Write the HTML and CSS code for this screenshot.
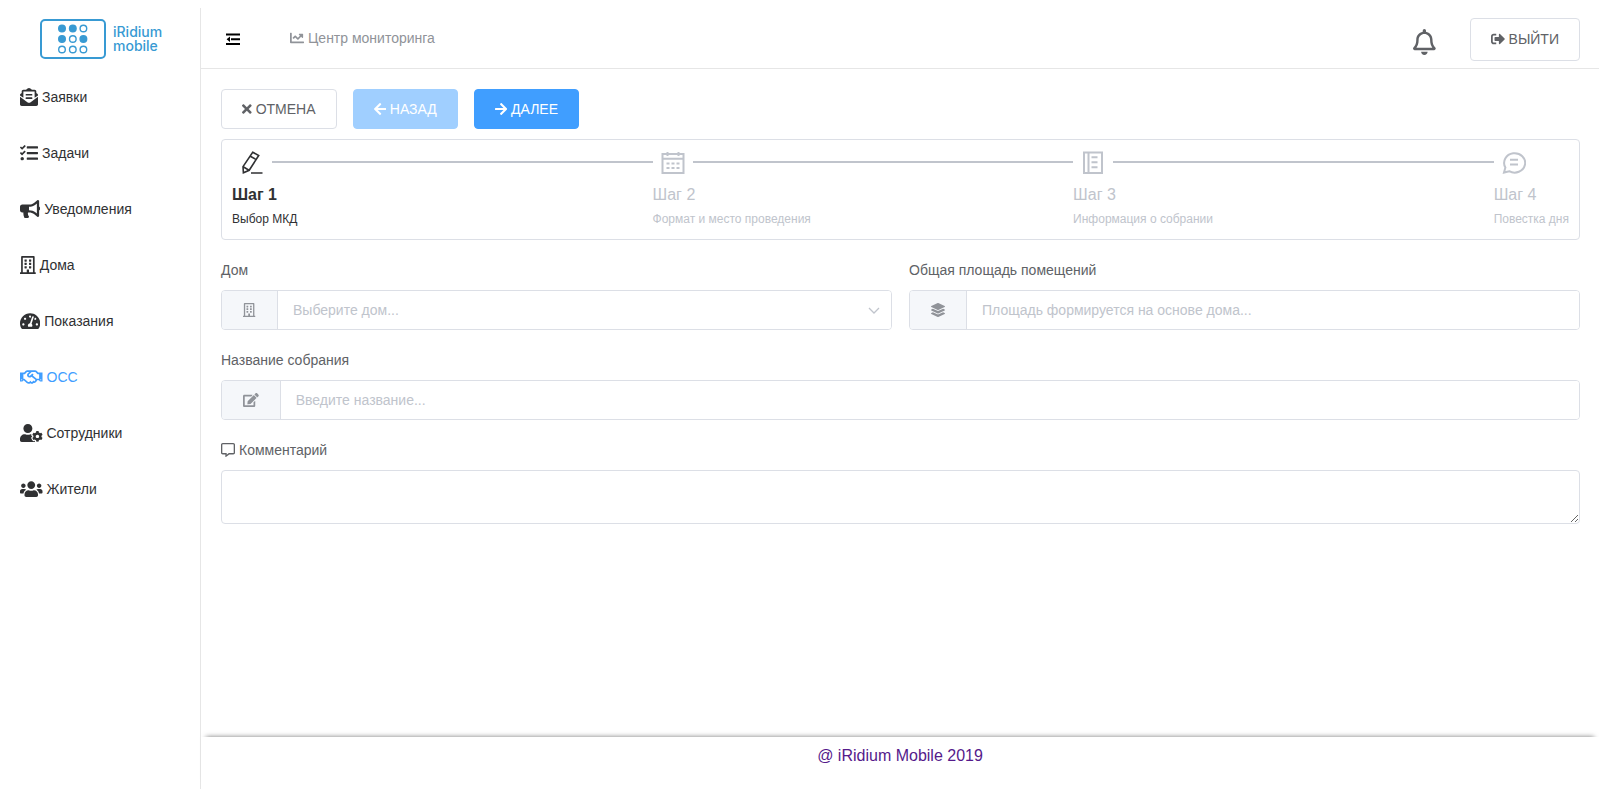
FILE: index.html
```html
<!DOCTYPE html>
<html lang="ru">
<head>
<meta charset="utf-8">
<title>iRidium mobile</title>
<link rel="stylesheet" href="styles.css">
</head>
<body>
<div class="layout">
  <aside class="sidebar">
    <a class="logo" href="#" aria-label="iRidium mobile">
      <svg class="logo-mark" viewBox="0 0 66 40" aria-hidden="true">
        <rect x="1" y="1" width="64" height="38" rx="4" fill="none" stroke="currentColor" stroke-width="2"/>
        <g fill="currentColor" stroke="currentColor" stroke-width="1.4">
          <circle cx="22" cy="9.500" r="3.300"/><circle cx="32.800" cy="9.500" r="3.300"/><circle cx="43.400" cy="9.500" r="3.300" fill="none"/>
          <circle cx="22" cy="20" r="3.300"/><circle cx="32.800" cy="20" r="3.300" fill="none"/><circle cx="43.400" cy="20" r="3.300"/>
          <circle cx="22" cy="30.500" r="3.300" fill="none"/><circle cx="32.800" cy="30.500" r="3.300" fill="none"/><circle cx="43.400" cy="30.500" r="3.300" fill="none"/>
        </g>
      </svg>
      <span class="logo-text">iRidium<br>mobile</span>
    </a>
    <nav class="menu">
      <a class="menu-item" href="#"><svg class="icon" viewBox="0 0 512 512"><path d="M176 216h160c8.840 0 16-7.160 16-16v-16c0-8.840-7.160-16-16-16H176c-8.840 0-16 7.160-16 16v16c0 8.840 7.160 16 16 16zm-16 80c0 8.840 7.160 16 16 16h160c8.840 0 16-7.160 16-16v-16c0-8.840-7.160-16-16-16H176c-8.840 0-16 7.160-16 16v16zm96 121.130c-16.420 0-32.840-5.060-46.860-15.190L0 250.860V464c0 26.510 21.490 48 48 48h416c26.510 0 48-21.490 48-48V250.860L302.860 401.940c-14.020 10.120-30.440 15.190-46.860 15.190zm237.610-254.180c-8.850-6.940-17.240-13.470-29.610-22.810V96c0-26.510-21.490-48-48-48h-77.550c-3.040-2.200-5.870-4.260-9.040-6.560C312.600 29.170 279.200-.35 256 0c-23.200-.35-56.590 29.170-73.410 41.440-3.170 2.300-6 4.360-9.040 6.560H96c-26.510 0-48 21.490-48 48v44.140c-12.370 9.330-20.760 15.870-29.610 22.810A48 48 0 0 0 0 200.720v10.650l96 69.350V96h320v184.720l96-69.350v-10.650c0-14.740-6.780-28.670-18.390-37.770z"/></svg><span>Заявки</span></a>
      <a class="menu-item" href="#"><svg class="icon" viewBox="0 0 512 512"><path d="M139.610 35.500a12 12 0 0 0-17 0L58.930 98.810l-22.700-22.120a12 12 0 0 0-17 0L3.530 92.410a12 12 0 0 0 0 17l47.590 47.400a12.780 12.780 0 0 0 17.610 0l15.590-15.620L156.520 69a12.090 12.090 0 0 0 .09-17zm0 159.190a12 12 0 0 0-17 0l-63.680 63.720-22.700-22.100a12 12 0 0 0-17 0L3.530 252a12 12 0 0 0 0 17L51 316.500a12.770 12.770 0 0 0 17.600 0l15.700-15.690 72.200-72.220a12 12 0 0 0 .09-16.900zM64 368c-26.490 0-48.590 21.500-48.590 48S37.530 464 64 464a48 48 0 0 0 0-96zm432 16H208a16 16 0 0 0-16 16v32a16 16 0 0 0 16 16h288a16 16 0 0 0 16-16v-32a16 16 0 0 0-16-16zm0-320H208a16 16 0 0 0-16 16v32a16 16 0 0 0 16 16h288a16 16 0 0 0 16-16V80a16 16 0 0 0-16-16zm0 160H208a16 16 0 0 0-16 16v32a16 16 0 0 0 16 16h288a16 16 0 0 0 16-16v-32a16 16 0 0 0-16-16z"/></svg><span>Задачи</span></a>
      <a class="menu-item" href="#"><svg class="icon" viewBox="0 0 576 512"><path d="M576 240c0-23.630-12.950-44.040-32-55.120V32.010C544 23.260 537.020 0 512 0c-7.120 0-14.190 2.380-19.980 7.020l-85.030 68.030C364.280 109.190 310.660 128 256 128H64c-35.350 0-64 28.650-64 64v96c0 35.350 28.650 64 64 64h33.700c-1.390 10.480-2.180 21.140-2.180 32 0 39.770 9.260 77.350 25.560 110.940 5.190 10.690 16.520 17.060 28.400 17.060h74.280c26.050 0 41.690-29.840 25.900-50.560-16.400-21.520-26.150-48.360-26.150-77.440 0-11.110 1.620-21.790 4.410-32H256c54.660 0 108.280 18.810 150.980 52.950l85.030 68.030a32 32 0 0 0 19.980 7.020c24.920 0 32-22.780 32-32V295.130C563.050 284.040 576 263.630 576 240zm-96 141.420l-33.050-26.440C392.950 311.780 325.120 288 256 288v-96c69.120 0 136.950-23.780 190.950-66.980L480 98.580v282.840z"/></svg><span>Уведомления</span></a>
      <a class="menu-item" href="#"><svg class="icon" viewBox="0 0 448 512"><path id="building" d="M128 148v-40c0-6.600 5.400-12 12-12h40c6.600 0 12 5.400 12 12v40c0 6.600-5.400 12-12 12h-40c-6.600 0-12-5.400-12-12zm140 12h40c6.600 0 12-5.400 12-12v-40c0-6.600-5.400-12-12-12h-40c-6.600 0-12 5.400-12 12v40c0 6.600 5.400 12 12 12zm-128 96h40c6.600 0 12-5.400 12-12v-40c0-6.600-5.400-12-12-12h-40c-6.600 0-12 5.400-12 12v40c0 6.600 5.400 12 12 12zm128 0h40c6.600 0 12-5.400 12-12v-40c0-6.600-5.400-12-12-12h-40c-6.600 0-12 5.400-12 12v40c0 6.600 5.400 12 12 12zm-76 84v-40c0-6.600-5.400-12-12-12h-40c-6.600 0-12 5.400-12 12v40c0 6.600 5.400 12 12 12h40c6.600 0 12-5.400 12-12zm76 12h40c6.600 0 12-5.400 12-12v-40c0-6.600-5.400-12-12-12h-40c-6.600 0-12 5.400-12 12v40c0 6.600 5.400 12 12 12zm180 124v36H0v-36c0-6.600 5.400-12 12-12h19.500V24c0-13.300 10.700-24 24-24h337c13.300 0 24 10.700 24 24v440H436c6.600 0 12 5.400 12 12zM79.500 463H192v-67c0-6.600 5.400-12 12-12h40c6.600 0 12 5.400 12 12v67h112.500V49L80 48l-.5 415z"/></svg><span>Дома</span></a>
      <a class="menu-item" href="#"><svg class="icon" viewBox="0 0 576 512"><path d="M288 32C128.940 32 0 160.940 0 320c0 52.800 14.250 102.260 39.060 144.800 5.610 9.620 16.300 15.200 27.440 15.200h443c11.140 0 21.830-5.580 27.440-15.200C561.750 422.260 576 372.800 576 320c0-159.060-128.940-288-288-288zm0 64c14.710 0 26.580 10.130 30.320 23.650-1.110 2.260-2.640 4.230-3.450 6.670l-9.220 27.670c-5.130 3.490-10.970 6.010-17.640 6.010-17.670 0-32-14.330-32-32S270.330 96 288 96zM96 384c-17.670 0-32-14.330-32-32s14.330-32 32-32 32 14.330 32 32-14.330 32-32 32zm48-160c-17.670 0-32-14.330-32-32s14.330-32 32-32 32 14.330 32 32-14.330 32-32 32zm246.770-72.410l-61.330 184C343.130 347.330 352 364.540 352 384c0 11.720-3.380 22.550-8.880 32H232.880c-5.500-9.450-8.880-20.280-8.880-32 0-33.940 26.500-61.430 59.900-63.590l61.340-184.010c4.170-12.560 17.730-19.450 30.360-15.170 12.570 4.190 19.350 17.790 15.170 30.360zm14.660 57.200l15.520-46.550c3.470-1.290 7.130-2.230 11.050-2.230 17.670 0 32 14.330 32 32s-14.330 32-32 32c-11.380-.01-20.890-6.280-26.570-15.220zM480 384c-17.670 0-32-14.330-32-32s14.330-32 32-32 32 14.330 32 32-14.330 32-32 32z"/></svg><span>Показания</span></a>
      <a class="menu-item menu-item-active" href="#" aria-current="page"><svg class="icon" viewBox="0 0 640 512"><path d="M519.200 127.900l-47.600-47.600A56.250 56.250 0 0 0 432 64H205.200c-14.800 0-29.100 5.900-39.600 16.300L118 127.900H0v255.700h64c17.600 0 31.800-14.200 31.900-31.700h9.100l84.600 76.400c30.900 25.100 73.800 25.700 105.600 3.800 12.500 10.800 26 15.900 41.100 15.900 18.200 0 35.300-7.400 48.800-24 22.100 8.700 48.200 2.600 64-16.800l26.200-32.300c5.600-6.900 9.100-14.800 10.900-23h57.900c.1 17.500 14.400 31.700 31.900 31.700h64V127.900H519.200zM48 351.600c-8.800 0-16-7.200-16-16s7.200-16 16-16 16 7.200 16 16c0 8.900-7.200 16-16 16zm390-6.900l-26.100 32.200c-2.800 3.400-7.800 4-11.300 1.200l-23.900-19.400-30 36.500c-6 7.300-15 4.800-18 2.400l-36.800-31.500-15.600 19.200c-13.900 17.100-39.200 19.700-55.300 6.600l-97.300-88H96V175.800h41.900l61.700-61.600c2-.8 3.700-1.500 5.700-2.300H262l-38.700 35.500c-29.400 26.900-31.100 72.300-4.400 101.300 14.800 16.200 61.200 41.200 101.500 4.400l8.200-7.500 108.200 87.800c3.400 2.800 3.900 7.900 1.200 11.300zm106-40.800h-69.200c-2.300-2.800-4.900-5.400-7.700-7.700l-102.700-83.400 12.500-11.400c6.500-6 7-16.100 1-22.600L367 167.100c-6-6.500-16.100-6.900-22.600-1l-55.200 50.600c-9.500 8.700-25.700 9.400-34.600 0-9.300-9.900-8.500-25.100 1.200-33.900l65.600-60.100c7.400-6.800 17-10.500 27-10.500l83.700-.2c2.100 0 4.100.8 5.500 2.300l61.700 61.600H544v128zm48 47.700c-8.800 0-16-7.200-16-16s7.200-16 16-16 16 7.200 16 16c0 8.900-7.200 16-16 16z"/></svg><span>ОСС</span></a>
      <a class="menu-item" href="#"><svg class="icon" viewBox="0 0 640 512"><path d="M610.500 373.300c2.600-14.100 2.600-28.500 0-42.600l25.800-14.900c3-1.700 4.300-5.200 3.300-8.500-6.700-21.600-18.200-41.200-33.200-57.400-2.300-2.500-6-3.100-9-1.400l-25.800 14.900c-10.900-9.300-23.400-16.500-36.900-21.300v-29.800c0-3.400-2.400-6.400-5.700-7.100-22.300-5-45-4.800-66.200 0-3.300.7-5.700 3.700-5.700 7.100v29.800c-13.500 4.800-26 12-36.900 21.300l-25.800-14.900c-2.900-1.700-6.700-1.100-9 1.400-15 16.200-26.500 35.800-33.200 57.400-1 3.300.4 6.800 3.300 8.500l25.800 14.900c-2.600 14.100-2.600 28.500 0 42.600l-25.800 14.900c-3 1.700-4.300 5.200-3.300 8.500 6.700 21.600 18.200 41.100 33.200 57.400 2.300 2.500 6 3.100 9 1.400l25.800-14.900c10.900 9.300 23.400 16.500 36.900 21.300v29.800c0 3.400 2.400 6.400 5.700 7.100 22.300 5 45 4.800 66.200 0 3.300-.7 5.700-3.700 5.700-7.100v-29.800c13.500-4.800 26-12 36.900-21.300l25.800 14.900c2.900 1.700 6.700 1.100 9-1.400 15-16.200 26.500-35.800 33.200-57.400 1-3.300-.4-6.800-3.300-8.500l-25.800-14.900zM496 400.500c-26.800 0-48.500-21.800-48.500-48.500s21.800-48.500 48.500-48.500 48.500 21.800 48.500 48.500-21.700 48.500-48.500 48.500zM224 256c70.700 0 128-57.300 128-128S294.700 0 224 0 96 57.300 96 128s57.300 128 128 128zm201.200 226.500c-2.300-1.200-4.600-2.600-6.800-3.900l-7.900 4.600c-6 3.400-12.800 5.300-19.600 5.300-10.900 0-21.400-4.600-28.900-12.600-18.300-19.800-32.300-43.900-40.200-69.600-5.500-17.700 1.900-36.400 17.900-45.700l7.900-4.600c-.1-2.600-.1-5.200 0-7.800l-7.900-4.600c-16-9.200-23.400-28-17.900-45.700.9-2.900 2.200-5.800 3.200-8.700-3.800-.3-7.500-1.200-11.400-1.200h-16.700c-22.200 10.200-46.900 16-72.900 16s-50.600-5.800-72.900-16h-16.700C60.200 288 0 348.200 0 422.400V464c0 26.500 21.500 48 48 48h352c10.100 0 19.500-3.200 27.200-8.500-1.200-3.800-2-7.700-2-11.800v-9.200z"/></svg><span>Сотрудники</span></a>
      <a class="menu-item" href="#"><svg class="icon" viewBox="0 0 640 512"><path d="M96 224c35.300 0 64-28.700 64-64s-28.700-64-64-64-64 28.700-64 64 28.700 64 64 64zm448 0c35.300 0 64-28.700 64-64s-28.700-64-64-64-64 28.700-64 64 28.700 64 64 64zm32 32h-64c-17.600 0-33.500 7.100-45.100 18.600 40.300 22.100 68.900 62 75.100 109.400h66c17.700 0 32-14.300 32-32v-32c0-35.300-28.700-64-64-64zm-256 0c61.900 0 112-50.100 112-112S381.900 32 320 32 208 82.100 208 144s50.100 112 112 112zm76.800 32h-8.300c-20.800 10-43.900 16-68.500 16s-47.600-6-68.500-16h-8.300C179.600 288 128 339.600 128 403.200V432c0 26.500 21.500 48 48 48h288c26.500 0 48-21.500 48-48v-28.800c0-63.600-51.600-115.200-115.200-115.200zm-223.700-13.400C161.500 263.100 145.600 256 128 256H64c-35.300 0-64 28.700-64 64v32c0 17.700 14.300 32 32 32h65.900c6.300-47.400 34.900-87.300 75.200-109.400z"/></svg><span>Жители</span></a>
    </nav>
  </aside>

  <div class="page">
    <header class="header">
      <button class="toggle" type="button" aria-label="Свернуть меню">
        <svg class="icon" viewBox="0 0 14 16"><path d="M0 2.500h14v2H0zM5 7.300h9v2H5zM0 12h14v2H0zM4 5.600v5.400L.6 8.300z"/></svg>
      </button>
      <a class="monitor-link" href="#"><svg class="icon" viewBox="0 0 512 512"><path d="M496 384H64V80c0-8.840-7.160-16-16-16H16C7.160 64 0 71.160 0 80v336c0 17.670 14.330 32 32 32h464c8.840 0 16-7.160 16-16v-32c0-8.840-7.160-16-16-16zM464 96H345.940c-21.380 0-32.090 25.850-16.970 40.970l32.400 32.400L288 242.750l-73.370-73.370c-12.500-12.500-32.760-12.500-45.250 0l-68.690 68.690c-6.250 6.250-6.250 16.380 0 22.630l22.620 22.620c6.250 6.250 16.380 6.250 22.630 0L192 237.250l73.370 73.370c12.500 12.500 32.760 12.500 45.250 0l96-96 32.400 32.400c15.120 15.120 40.970 4.410 40.970-16.970V112c.01-8.840-7.150-16-15.990-16z"/></svg><span>Центр мониторинга</span></a>
      <button class="bell" type="button" aria-label="Оповещения">
        <svg class="icon" viewBox="0 0 448 512"><path d="M439.390 362.290c-19.320-20.760-55.470-51.990-55.470-154.290 0-77.700-54.480-139.900-127.940-155.160V32c0-17.670-14.320-32-31.980-32s-31.980 14.330-31.980 32v20.840C118.560 68.100 64.080 130.300 64.080 208c0 102.300-36.150 133.530-55.470 154.290-6 6.450-8.660 14.160-8.610 21.710.11 16.400 12.980 32 32.100 32h383.800c19.120 0 32-15.600 32.100-32 .05-7.550-2.610-15.270-8.610-21.710zM67.530 368c21.220-27.970 44.420-74.330 44.530-159.420 0-.2-.06-.38-.06-.58 0-61.860 50.140-112 112-112s112 50.140 112 112c0 .2-.06.38-.06.58.11 85.100 23.310 131.460 44.530 159.420H67.530zM224 512c35.320 0 63.970-28.650 63.970-64H160.030c0 35.350 28.650 64 63.970 64z"/></svg>
      </button>
      <button class="button logout" type="button"><svg class="icon" viewBox="0 0 512 512"><path d="M497 273L329 441c-15 15-41 4.500-41-17v-96H152c-13.300 0-24-10.700-24-24v-96c0-13.300 10.700-24 24-24h136V88c0-21.400 25.900-32 41-17l168 168c9.300 9.400 9.300 24.600 0 34zM192 436v-40c0-6.600-5.400-12-12-12H96c-17.700 0-32-14.300-32-32V160c0-17.700 14.300-32 32-32h84c6.600 0 12-5.400 12-12V76c0-6.600-5.400-12-12-12H96c-53 0-96 43-96 96v192c0 53 43 96 96 96h84c6.600 0 12-5.400 12-12z"/></svg><span>ВЫЙТИ</span></button>
    </header>

    <main class="content">
      <div class="actions">
        <button class="button" type="button"><svg class="icon" viewBox="0 0 352 512"><path d="M242.720 256l100.070-100.070c12.280-12.280 12.280-32.190 0-44.480l-22.240-22.240c-12.280-12.280-32.190-12.280-44.480 0L176 189.280 75.930 89.210c-12.280-12.280-32.190-12.280-44.480 0L9.210 111.450c-12.280 12.280-12.280 32.190 0 44.480L109.280 256 9.210 356.070c-12.280 12.280-12.280 32.190 0 44.480l22.240 22.240c12.280 12.280 32.200 12.280 44.480 0L176 322.720l100.070 100.070c12.280 12.280 32.200 12.280 44.480 0l22.240-22.240c12.280-12.280 12.280-32.190 0-44.480L242.720 256z"/></svg><span>ОТМЕНА</span></button>
        <button class="button button-primary" type="button" disabled><svg class="icon" viewBox="0 0 448 512"><path d="M257.500 445.100l-22.200 22.200c-9.400 9.400-24.600 9.400-33.900 0L7 273c-9.400-9.400-9.400-24.600 0-33.900L201.400 44.700c9.400-9.400 24.600-9.400 33.900 0l22.200 22.200c9.500 9.500 9.300 25-.4 34.300L136.600 216H424c13.300 0 24 10.700 24 24v32c0 13.300-10.700 24-24 24H136.600l120.500 114.800c9.800 9.300 10 24.800.4 34.300z"/></svg><span>НАЗАД</span></button>
        <button class="button button-primary" type="button"><svg class="icon" viewBox="0 0 448 512"><path d="M190.500 66.900l22.200-22.200c9.400-9.400 24.600-9.400 33.900 0L441 239c9.400 9.400 9.400 24.600 0 33.900L246.600 467.300c-9.400 9.400-24.600 9.400-33.900 0l-22.200-22.200c-9.500-9.500-9.300-25 .4-34.300L311.400 296H24c-13.300 0-24-10.700-24-24v-32c0-13.300 10.700-24 24-24h287.400L190.900 101.200c-9.800-9.300-10-24.800-.4-34.300z"/></svg><span>ДАЛЕЕ</span></button>
      </div>

      <ol class="steps">
        <li class="step step-current" aria-current="step">
          <div class="step-head"><svg class="step-icon" viewBox="0 0 24 24"><path d="M12.700 2.200l6 3.300L9.200 20.300l-5.800 2.500-.4-6.200zM10.300 6.200l6 3.400M3.200 16.800l5.800 3.400M11 23h11.500"/></svg></div>
          <div class="step-title">Шаг 1</div>
          <div class="step-text">Выбор МКД</div>
        </li>
        <li class="step">
          <div class="step-head"><svg class="step-icon" viewBox="0 0 24 24"><path d="M1.500 4h21v19h-21zM1.500 8.800h21M6.500 2v4M17.500 2v4M5.500 13.500h3M10.500 13.500h3M15.500 13.500h3M5.500 18h3M10.500 18h3M15.500 18h3"/></svg></div>
          <div class="step-title">Шаг 2</div>
          <div class="step-text">Формат и место проведения</div>
        </li>
        <li class="step">
          <div class="step-head"><svg class="step-icon" viewBox="0 0 24 24"><path d="M3 2.500h18v20.500H3zM7.500 2.500v20.500M10.500 7.200h6M10.500 12.200h6M10.500 17.200h6"/></svg></div>
          <div class="step-title">Шаг 3</div>
          <div class="step-text">Информация о собрании</div>
        </li>
        <li class="step step-last">
          <div class="step-head"><svg class="step-icon" viewBox="0 0 24 24"><path d="M2 22.500l1.400-5A10.500 9.700 0 1 1 7.200 21.200zM8 9.700h8M8 14.500h8"/></svg></div>
          <div class="step-title">Шаг 4</div>
          <div class="step-text">Повестка дня</div>
        </li>
      </ol>

      <form class="form">
        <div class="field-row">
          <div class="field">
            <label class="label" for="house">Дом</label>
            <div class="group">
              <span class="addon"><svg class="icon" viewBox="0 0 448 512"><use href="#building"/></svg></span>
              <select class="control select" id="house"><option value="">Выберите дом...</option></select>
              <svg class="chevron" viewBox="0 0 12 8" aria-hidden="true"><path d="M1 1l5 5 5-5"/></svg>
            </div>
          </div>
          <div class="field">
            <label class="label" for="area">Общая площадь помещений</label>
            <div class="group">
              <span class="addon"><svg class="icon" viewBox="0 0 512 512"><path d="M12.410 148.020l232.940 105.670c6.800 3.090 14.490 3.090 21.290 0l232.940-105.670c16.550-7.510 16.550-32.520 0-40.030L266.650 2.310a25.600 25.600 0 0 0-21.290 0L12.410 107.980c-16.550 7.510-16.550 32.530 0 40.040zm487.180 88.280l-58.090-26.330-161.640 73.270c-7.560 3.430-15.590 5.170-23.860 5.170s-16.290-1.740-23.860-5.170L70.510 209.970l-58.100 26.330c-16.550 7.500-16.550 32.500 0 40l232.940 105.590c6.800 3.080 14.490 3.080 21.290 0L499.590 276.300c16.550-7.500 16.550-32.500 0-40zm0 127.800l-57.870-26.230-161.860 73.370c-7.560 3.430-15.590 5.170-23.860 5.170s-16.290-1.740-23.860-5.170L70.290 337.870 12.410 364.100c-16.550 7.500-16.550 32.500 0 40l232.940 105.590c6.800 3.080 14.490 3.080 21.290 0L499.590 404.100c16.550-7.500 16.550-32.500 0-40z"/></svg></span>
              <input class="control" id="area" type="text" placeholder="Площадь формируется на основе дома..." readonly>
            </div>
          </div>
        </div>
        <div class="field">
          <label class="label" for="title">Название собрания</label>
          <div class="group">
            <span class="addon"><svg class="icon" viewBox="0 0 576 512"><path d="M402.600 83.200l90.200 90.200c3.800 3.800 3.800 10 0 13.800L274.400 405.600l-92.800 10.300c-12.400 1.400-22.900-9.100-21.500-21.500l10.300-92.800L388.800 83.200c3.800-3.800 10-3.800 13.800 0zm162-22.900l-48.800-48.800c-15.200-15.200-39.900-15.200-55.200 0l-35.400 35.400c-3.800 3.800-3.800 10 0 13.800l90.200 90.200c3.800 3.800 10 3.800 13.800 0l35.400-35.400c15.200-15.300 15.200-40 0-55.200zM384 346.200V448H64V128h229.800c3.200 0 6.200-1.300 8.500-3.500l40-40c7.600-7.600 2.200-20.500-8.500-20.500H48C21.500 64 0 85.500 0 112v352c0 26.500 21.500 48 48 48h352c26.500 0 48-21.500 48-48V306.200c0-10.700-12.900-16-20.500-8.500l-40 40c-2.200 2.300-3.500 5.300-3.500 8.500z"/></svg></span>
            <input class="control" id="title" type="text" placeholder="Введите название...">
          </div>
        </div>
        <div class="field">
          <label class="label" for="comment"><svg class="icon" viewBox="0 0 512 512"><path d="M448 0H64C28.700 0 0 28.700 0 64v288c0 35.300 28.700 64 64 64h96v84c0 7.100 5.800 12 12 12 2.400 0 4.900-.7 7.100-2.400L304 416h144c35.300 0 64-28.700 64-64V64c0-35.300-28.700-64-64-64zm16 352c0 8.800-7.200 16-16 16H288l-12.800 9.600L208 428v-60H64c-8.800 0-16-7.200-16-16V64c0-8.800 7.200-16 16-16h384c8.800 0 16 7.200 16 16v288z"/></svg><span>Комментарий</span></label>
          <textarea class="textarea" id="comment" rows="2"></textarea>
        </div>
      </form>
    </main>

    <footer class="footer"><a class="footer-link" href="#">@ iRidium Mobile 2019</a></footer>
  </div>
</div>
</body>
</html>
```
FILE: styles.css
```css
* {
  box-sizing: border-box;
}

body {
  margin: 8px 0 0;
  background: #fff;
  color: #606266;
  font-family: "Liberation Sans", Arial, sans-serif;
  font-size: 14px;
}

a {
  color: inherit;
  text-decoration: none;
}

button,
input,
select,
textarea {
  margin: 0;
  color: inherit;
  font: inherit;
}

.icon {
  display: block;
  flex: none;
  width: auto;
  height: 14px;
  fill: currentColor;
}

.layout {
  display: flex;
  min-height: calc(100vh - 8px);
}

/* Sidebar */
.sidebar {
  flex: none;
  width: 201px;
  border-right: 1px solid #e6e6e6;
}

.logo {
  display: flex;
  align-items: center;
  gap: 7px;
  height: 61px;
  padding-left: 40px;
  color: #389ad3;
}

.logo-mark {
  width: 66px;
  height: 40px;
}

.logo-text {
  font-family: Inter, sans-serif;
  font-size: 14px;
  font-weight: 500;
  line-height: 14px;
}

.menu-item {
  display: flex;
  align-items: center;
  gap: 4px;
  height: 56px;
  padding: 0 20px;
  color: #303133;
}

.menu-item .icon {
  height: 18px;
}

.menu-item-active {
  color: #409eff;
}

/* Page */
.page {
  display: flex;
  flex: 1;
  flex-direction: column;
  min-width: 0;
}

.header {
  display: flex;
  align-items: center;
  height: 61px;
  padding: 2px 19px 0 25px;
  border-bottom: 1px solid #e6e6e6;
}

.toggle,
.bell {
  padding: 0;
  border: 0;
  background: none;
  cursor: pointer;
}

.toggle {
  color: #000;
}

.toggle .icon {
  height: 16px;
}

.monitor-link {
  display: flex;
  align-items: center;
  gap: 4px;
  margin: 0 auto 0 50px;
  padding-bottom: 2px;
  color: #909399;
}

.bell {
  margin-right: 34px;
  padding-top: 5px;
}

.bell .icon {
  height: 26px;
}

.button {
  display: flex;
  align-items: center;
  gap: 4px;
  height: 40px;
  padding: 0 20px;
  border: 1px solid #dcdfe6;
  border-radius: 4px;
  background: #fff;
  cursor: pointer;
}

.button-primary {
  border-color: #409eff;
  background: #409eff;
  color: #fff;
}

.button-primary:disabled {
  border-color: #a0cfff;
  background: #a0cfff;
  cursor: not-allowed;
}

.logout {
  height: 43px;
}

.content {
  display: flex;
  flex: 1;
  flex-direction: column;
  gap: 10px;
  padding: 20px 19px 20px 20px;
}

.actions {
  display: flex;
  gap: 16px;
}

/* Steps */
.steps {
  display: flex;
  margin: 0;
  padding: 10px 10px 12px;
  border: 1px solid #dcdfe6;
  border-radius: 4px;
  color: #c0c4cc;
  list-style: none;
}

.step {
  flex: 1;
}

.step-last {
  flex: none;
}

.step-current {
  color: #303133;
}

.step-head {
  display: flex;
  align-items: center;
  height: 24px;
  margin-bottom: 4px;
}

.step-head::after {
  flex: 1;
  height: 2px;
  background: #c0c4cc;
  content: "";
}

.step-last .step-head::after {
  display: none;
}

.step-icon {
  width: 24px;
  height: 24px;
  margin: 0 8px;
  fill: none;
  stroke: currentColor;
  stroke-width: 2;
}

.step-current .step-icon {
  stroke-width: 1.6;
}

.step-title {
  font-size: 16px;
  line-height: 34px;
}

.step-current .step-title {
  font-weight: 700;
}

.step-text {
  font-size: 12px;
  line-height: 15px;
}

/* Form */
.form {
  display: flex;
  flex-direction: column;
  gap: 10px;
}

.field-row {
  display: grid;
  grid-template-columns: 1fr 1fr;
  gap: 17px;
}

.label {
  display: flex;
  align-items: center;
  gap: 4px;
  height: 40px;
}

.group {
  position: relative;
  display: flex;
  height: 40px;
  border: 1px solid #dcdfe6;
  border-radius: 4px;
  overflow: hidden;
}

.addon {
  display: flex;
  flex: none;
  align-items: center;
  justify-content: center;
  min-width: 56px;
  padding: 0 21px;
  border-right: 1px solid #dcdfe6;
  background: #f5f7fa;
  color: #909399;
}

.control {
  flex: 1;
  min-width: 0;
  padding: 0 15px;
  border: 0;
  background: #fff;
  outline: 0;
}

.control::placeholder {
  color: #c0c4cc;
}

.select {
  appearance: none;
  color: #c0c4cc;
}

.chevron {
  position: absolute;
  top: 16px;
  right: 11px;
  width: 12px;
  height: 8px;
  fill: none;
  stroke: #c0c4cc;
  stroke-width: 1.3;
  pointer-events: none;
}

.textarea {
  display: block;
  width: 100%;
  height: 54px;
  padding: 5px 15px;
  border: 1px solid #dcdfe6;
  border-radius: 4px;
  outline: 0;
  resize: vertical;
}

.footer {
  height: 52px;
  padding-top: 10px;
  box-shadow: 0 -5px 5px -5px #777;
  color: #551a8b;
  font-size: 16px;
  line-height: 18px;
  text-align: center;
}
```
